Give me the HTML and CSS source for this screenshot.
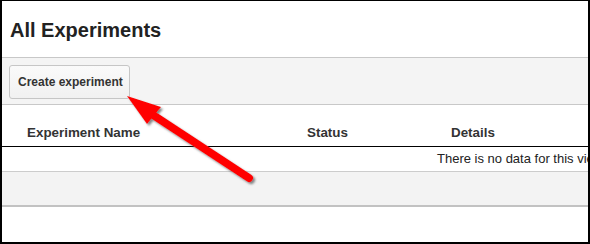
FILE: index.html
```html
<!DOCTYPE html>
<html>
<head>
<meta charset="utf-8">
<link rel="stylesheet" href="styles.css">
</head>
<body>
<div class="frame">
  <h1 class="title">All Experiments</h1>
  <div class="toolbar">
    <button class="btn">Create experiment</button>
  </div>
  <div class="table">
    <div class="thead">
      <div class="th">Experiment Name</div>
      <div class="th">Status</div>
      <div class="th">Details</div>
    </div>
    <div class="empty">There is no data for this view.</div>
    <div class="footer-row"></div>
  </div>
  <svg class="arrow" width="590" height="244" viewBox="0 0 590 244">
    <defs>
      <filter id="sh" x="-20%" y="-20%" width="140%" height="140%">
        <feDropShadow dx="2" dy="2" stdDeviation="1.3" flood-color="#555" flood-opacity="0.7"/>
      </filter>
    </defs>
    <g filter="url(#sh)" fill="#ff0000" stroke="none">
      <line x1="150" y1="113" x2="249" y2="178" stroke="#ff0000" stroke-width="8" stroke-linecap="round"/>
      <polygon points="127,96 161,107 147,124"/>
    </g>
  </svg>
</div>
</body>
</html>
```
FILE: styles.css
```css
html, body {
  margin: 0;
  padding: 0;
  background: #ffffff;
}
.frame {
  position: relative;
  width: 590px;
  height: 244px;
  box-sizing: border-box;
  border-top: 1px solid #000;
  border-left: 2px solid #000;
  border-right: 2px solid #000;
  border-bottom: 2px solid #000;
  overflow: hidden;
  font-family: "Liberation Sans", Arial, sans-serif;
  color: #333;
}
.title {
  margin: 0;
  padding: 17px 0 15px 8px;
  font-size: 20px;
  line-height: 24px;
  font-weight: bold;
  color: #222;
}
.toolbar {
  border-top: 1px solid #c8c8c8;
  border-bottom: 1px solid #c8c8c8;
  background: #f4f4f4;
  height: 46px;
  box-sizing: content-box;
  padding: 0 0 0 7px;
  display: flex;
  align-items: flex-start;
}
.btn {
  margin-top: 7px;
  height: 34px;
  width: 121px;
  box-sizing: border-box;
  padding: 0 6px 0 8px;
  border: 1px solid #c6c6c6;
  border-radius: 3px;
  background: linear-gradient(#fafafa, #f1f1f1);
  font-family: "Liberation Sans", Arial, sans-serif;
  font-size: 12px;
  font-weight: bold;
  color: #333;
  text-align: left;
  white-space: nowrap;
}
.thead {
  display: grid;
  grid-template-columns: 280px 144px 1fr;
  padding-left: 25px;
  height: 41px;
  align-items: end;
  border-bottom: 1px solid #000;
}
.th {
  font-size: 13.4px;
  font-weight: bold;
  line-height: 16px;
  padding-bottom: 5px;
  color: #333;
}
.empty {
  height: 24px;
  line-height: 24px;
  padding-left: 435px;
  font-size: 13px;
  color: #222;
  white-space: nowrap;
}
.footer-row {
  height: 33px;
  background: #f3f3f3;
  border-top: 1px solid #cccccc;
  border-bottom: 2px solid #c2c2c2;
}
.arrow {
  position: absolute;
  left: -2px;
  top: -1px;
  pointer-events: none;
}
```
